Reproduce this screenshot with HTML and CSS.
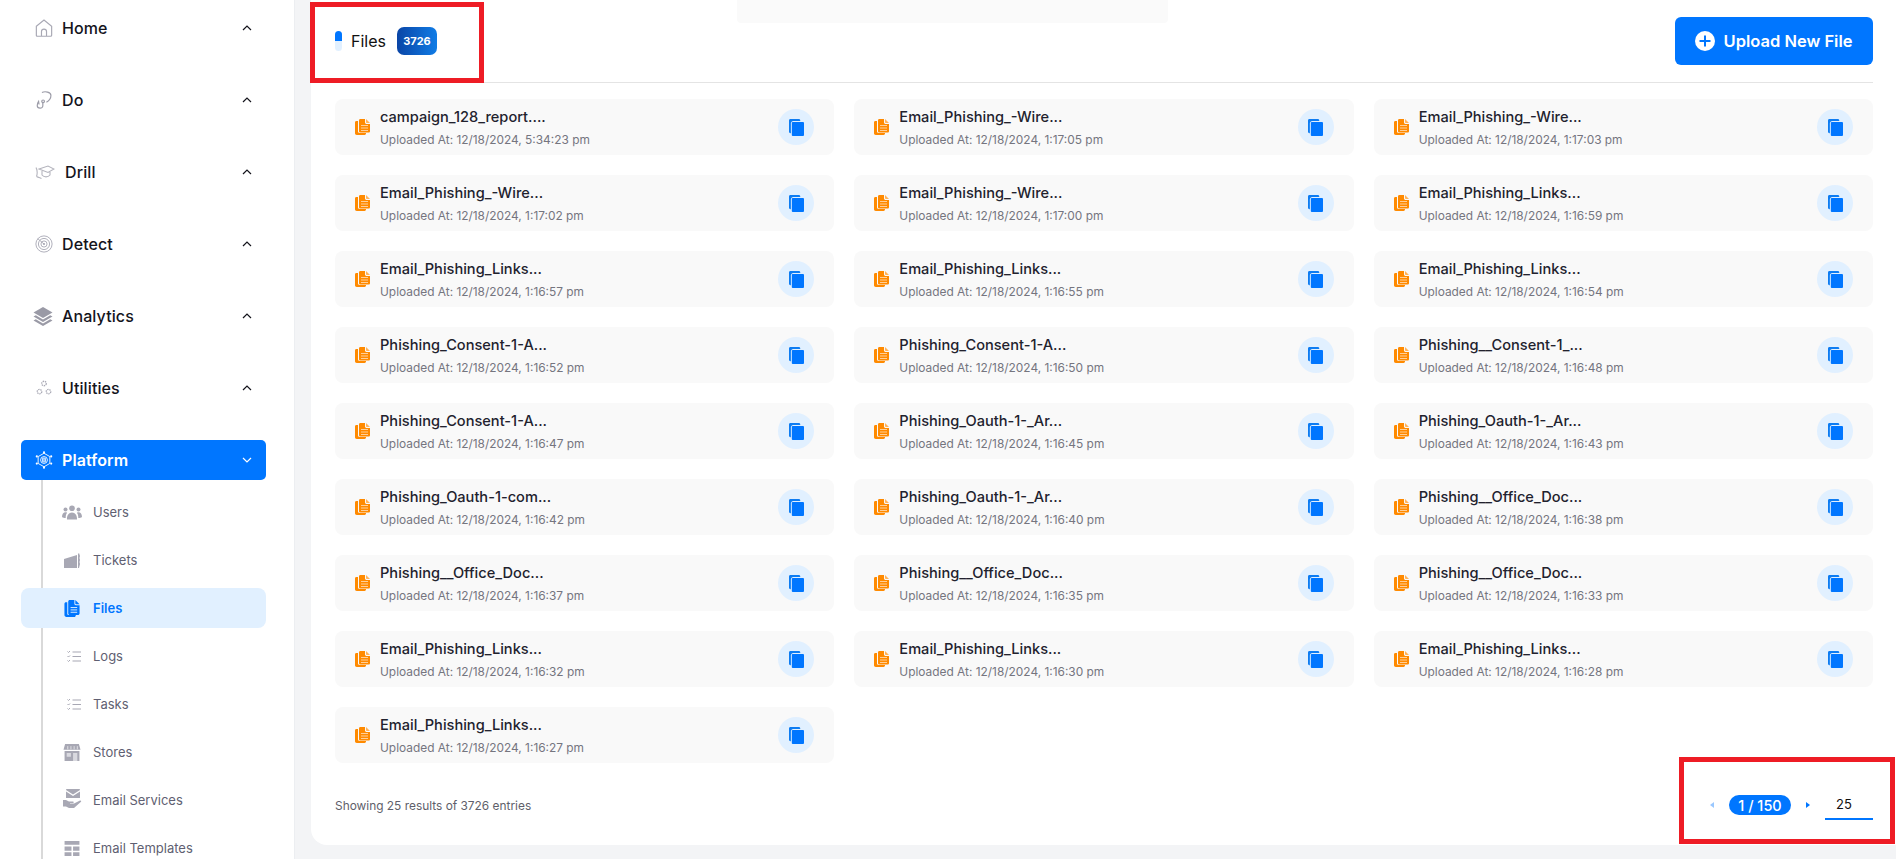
FILE: index.html
```html
<!DOCTYPE html>
<html lang="en">
<head>
  <meta charset="UTF-8">
  <meta name="viewport" content="width=device-width, initial-scale=1.0">
  <title>Files</title>
  <link rel="stylesheet" href="styles.css">
</head>
<body>
  <svg class="sprites" width="0" height="0">
    <symbol id="file-icon" viewBox="0 0 15 16">
      <path fill="#ff8a00" d="M3 2H1.4C.6 2 0 2.600 0 3.400V14.300C0 15.200.8 16 1.700 16h7.900c.8 0 1.400-.6 1.400-1.400V14H4.400C3.600 14 3 13.400 3 12.600z"/>
      <path fill="#ff8a00" d="M5.400 0C4.600 0 4 .6 4 1.400v10.800c0 .8.600 1.400 1.400 1.400h8.200c.8 0 1.400-.6 1.400-1.400V5h-3.400c-.8 0-1.600-.7-1.600-1.500V0z"/>
      <path fill="#ffb35c" d="M11 0v3.200c0 .5.400.8.800.8H15z"/>
      <path stroke="#ffcf99" stroke-width="1" d="M6 6.500h7M6 9h7M6 11.500h7"/>
    </symbol>
    <symbol id="copy-icon" viewBox="0 0 16 18">
      <path fill="#0d7cf2" d="M1.500 0h9C11.300 0 12 .7 12 1.500V2H4.500C3.100 2 2 3.100 2 4.500V15h-.5C.7 15 0 14.300 0 13.500v-12C0 .7.700 0 1.500 0z"/>
      <rect x="3" y="3" width="13" height="15" rx="1" fill="#0076ff"/>
    </symbol>
    <symbol id="check-list" viewBox="0 0 14 12">
      <path fill="none" stroke="#a8a8b4" stroke-width="1" d="M.5 1l1 1L3 .5M.5 5.500l1 1L3 5M.5 10l1 1L3 9.500"/>
      <path fill="none" stroke="#a8a8b4" stroke-width="1.200" d="M5.500 1.500H14M5.500 6H14M5.500 10.500H14"/>
    </symbol>
    <symbol id="chevron" viewBox="0 0 10 6">
      <path fill="none" stroke="currentColor" stroke-width="1.200" d="M1 5l4-4 4 4"/>
    </symbol>
  </svg>

  <div class="layout">
    <aside class="sidebar">
      <div class="nav-item">
        <svg class="nav-icon" viewBox="0 0 20 20"><path fill="none" stroke="#a8a8b4" stroke-width="1.300" d="M1.500 8L10 1.200 18.500 8v10a1.200 1.200 0 0 1-1.200 1.200H2.700A1.200 1.200 0 0 1 1.500 18zM7.200 19v-5a2.800 2.800 0 0 1 5.600 0v5"/></svg>
        <span class="nav-label">Home</span>
        <svg class="chevron"><use href="#chevron"/></svg>
      </div>
      <div class="nav-item">
        <svg class="nav-icon" viewBox="0 0 18 20"><g fill="none" stroke="#9c9ca8" stroke-width="1.300"><path d="M6.700 1.700C10 0 16.700 1 16.700 5c0 3-2.500 6-5 7.500"/><path d="M7.700 13v3.500c0 3.500-6.200 3.500-6.200-.5 0-1.500.5-3 1.500-4.500l.5 3.500"/><circle cx="8" cy="11.500" r="1.500"/></g></svg>
        <span class="nav-label">Do</span>
        <svg class="chevron"><use href="#chevron"/></svg>
      </div>
      <div class="nav-item">
        <svg class="nav-icon nav-icon-wide" viewBox="0 0 20 16"><path fill="none" stroke="#b4b4bd" stroke-width="1.100" d="M4 5l9-3 6 3-6 3.500zM7 7v4c2 2.500 6 2.500 8 0V7M1 3.500c1 2 1.500 6 .5 9M1.500 12.500c2 1 4 1.500 5 2"/></svg>
        <span class="nav-label">Drill</span>
        <svg class="chevron"><use href="#chevron"/></svg>
      </div>
      <div class="nav-item">
        <svg class="nav-icon" viewBox="0 0 20 20"><g fill="none" stroke="#a8a8b4" stroke-width="1"><circle cx="10" cy="10" r="9"/><circle cx="10" cy="10" r="6.200"/><circle cx="10" cy="10" r="3.400"/><path d="M10 10L3 4"/></g><circle cx="10" cy="10" r="1.200" fill="#a8a8b4"/></svg>
        <span class="nav-label">Detect</span>
        <svg class="chevron"><use href="#chevron"/></svg>
      </div>
      <div class="nav-item">
        <svg class="nav-icon nav-icon-layers" viewBox="0 0 20 20"><path fill="#9a9aa6" d="M10 1l9.500 5.500L10 12 .5 6.500z"/><path fill="#9a9aa6" d="M2.800 9.300L.5 10.500 10 16l9.500-5.500-2.300-1.200L10 13.500z"/><path fill="#9a9aa6" d="M2.800 13.300L.5 14.500 10 20l9.500-5.500-2.300-1.200L10 17.500z"/></svg>
        <span class="nav-label">Analytics</span>
        <svg class="chevron"><use href="#chevron"/></svg>
      </div>
      <div class="nav-item">
        <svg class="nav-icon" viewBox="0 0 20 20"><g fill="none" stroke="#a8a8b4" stroke-width="1.500" stroke-dasharray="1.500 .8"><circle cx="10" cy="5" r="2.500"/><circle cx="5" cy="14" r="2.500"/><circle cx="15" cy="14" r="2.500"/></g></svg>
        <span class="nav-label">Utilities</span>
        <svg class="chevron"><use href="#chevron"/></svg>
      </div>
      <div class="nav-item nav-item-active">
        <svg class="nav-icon" viewBox="0 0 20 20"><g fill="none" stroke="#fff" stroke-width="1"><path d="M10 2.500l6.500 3.700v7.600L10 17.500l-6.500-3.700V6.200z"/><circle cx="10" cy="10" r="3.800"/><path d="M8.500 8h3v4h-3zM8.500 10h3"/></g><g fill="#fff"><circle cx="10" cy="1.500" r="1.200"/><circle cx="10" cy="18.500" r="1.200"/><circle cx="2" cy="6" r="1.200"/><circle cx="18" cy="6" r="1.200"/><circle cx="2" cy="14" r="1.200"/><circle cx="18" cy="14" r="1.200"/></g></svg>
        <span class="nav-label">Platform</span>
        <svg class="chevron chevron-down"><use href="#chevron"/></svg>
      </div>
      <div class="sub-list">
        <div class="sub-item">
          <svg class="sub-icon" viewBox="0 0 20 14"><g fill="#a8a8b4"><circle cx="10" cy="2.800" r="2.800"/><circle cx="3.500" cy="4" r="2"/><circle cx="16.500" cy="4" r="2"/><path d="M5 14c-.3-4 1.800-7 5-7s5.300 3 5 7zM0 11.500C0 8.500 1.400 6.800 3.500 6.800c.6 0 1.100.1 1.600.4C4.200 8.300 3.700 10 3.700 12.500c-1.400 0-2.800-.4-3.700-1zM20 11.500c0-3-1.400-4.700-3.500-4.700-.6 0-1.100.1-1.600.4.900 1.100 1.400 2.800 1.400 5.300 1.400 0 2.800-.4 3.700-1z"/></g></svg>
          <span>Users</span>
        </div>
        <div class="sub-item">
          <svg class="sub-icon" viewBox="-2 0 20 15"><g fill="#a8a8b4"><path d="M0 6L13 2v13H0z"/><path d="M14 1l1-1 1 3-.5 2 .5 2-.5 2 .5 2-.5 2-.5 2h-1z"/></g></svg>
          <span>Tickets</span>
        </div>
        <div class="sub-item sub-item-active">
          <svg class="sub-icon" viewBox="0 0 16 18"><path fill="#0076ff" d="M3 2.500H1.600C.7 2.500 0 3.200 0 4.100V16c0 1.100.9 2 2 2h8.400c.9 0 1.600-.7 1.600-1.600v-.4H4.500C3.600 16 3 15.400 3 14.500z"/><path fill="#0076ff" d="M5.500 0C4.700 0 4 .7 4 1.500v12.800c0 .9.700 1.700 1.600 1.700h8.700c.9 0 1.700-.8 1.700-1.700V5.500h-4C11.200 5.500 10.500 4.800 10.500 4V0z"/><path fill="#0076ff" d="M11.500 0v3.700c0 .4.300.8.800.8H16z"/><path stroke="#e1f0ff" stroke-width="1" d="M6.500 8h7M6.500 10.500h7M6.500 13h7"/></svg>
          <span>Files</span>
        </div>
        <div class="sub-item">
          <svg class="sub-icon sub-icon-small"><use href="#check-list"/></svg>
          <span>Logs</span>
        </div>
        <div class="sub-item">
          <svg class="sub-icon sub-icon-small"><use href="#check-list"/></svg>
          <span>Tasks</span>
        </div>
        <div class="sub-item">
          <svg class="sub-icon" viewBox="0 0 16 16"><path fill="#a8a8b4" d="M1.500 0h13L16 5.500H0zM1 6.500h14V16H1z"/><path stroke="#fff" stroke-width=".6" d="M4 2v3M7 2v3M10 2v3M13 2v3"/><path fill="#d9d9df" d="M3 8.500h4V12H3zM9 8.500h4V16H9z"/></svg>
          <span>Stores</span>
        </div>
        <div class="sub-item">
          <svg class="sub-icon sub-icon-tall" viewBox="0 0 18 20"><path fill="#a8a8b4" d="M4 0h12c.6 0 1 .4 1 1l-7 4.500L3 1c0-.6.500-1 1-1zM3 2.500l7 4.500 7-4.500V9H3zM0 11h3l3 1.500h4c1 0 1 1.500 0 1.500H7v.5h4l6-3c1-.3 1.500.7 1 1.200L11 19H6l-3-1.500H0z"/></svg>
          <span>Email Services</span>
        </div>
        <div class="sub-item">
          <svg class="sub-icon" viewBox="0 0 16 16"><path fill="#a8a8b4" d="M1 1h14v3.500H1zM1 6h6.500v4H1zM9 6h6v4H9zM1 11.500h6.500V15H1zM9 11.500h6V15H9z"/></svg>
          <span>Email Templates</span>
        </div>
      </div>
    </aside>

    <main class="main">
      <section class="panel">
        <header class="panel-header">
          <div class="panel-title">
            <span class="title-mark"></span>
            <h1>Files</h1>
            <span class="count-badge">3726</span>
          </div>
          <button class="upload-btn">
            <svg class="upload-icon" viewBox="0 0 20 20"><circle cx="10" cy="10" r="10" fill="#fff"/><path stroke="#0076ff" stroke-width="2" d="M10 4.500v11M4.500 10h11"/></svg>
            Upload New File
          </button>
        </header>

        <div class="file-grid">
          <div class="file-card"><svg class="file-icon"><use href="#file-icon"/></svg><div class="file-info"><div class="file-name">campaign_128_report....</div><div class="file-date">Uploaded At: 12/18/2024, 5:34:23 pm</div></div><span class="copy-btn"><svg><use href="#copy-icon"/></svg></span></div>
          <div class="file-card"><svg class="file-icon"><use href="#file-icon"/></svg><div class="file-info"><div class="file-name">Email_Phishing_-Wire...</div><div class="file-date">Uploaded At: 12/18/2024, 1:17:05 pm</div></div><span class="copy-btn"><svg><use href="#copy-icon"/></svg></span></div>
          <div class="file-card"><svg class="file-icon"><use href="#file-icon"/></svg><div class="file-info"><div class="file-name">Email_Phishing_-Wire...</div><div class="file-date">Uploaded At: 12/18/2024, 1:17:03 pm</div></div><span class="copy-btn"><svg><use href="#copy-icon"/></svg></span></div>

          <div class="file-card"><svg class="file-icon"><use href="#file-icon"/></svg><div class="file-info"><div class="file-name">Email_Phishing_-Wire...</div><div class="file-date">Uploaded At: 12/18/2024, 1:17:02 pm</div></div><span class="copy-btn"><svg><use href="#copy-icon"/></svg></span></div>
          <div class="file-card"><svg class="file-icon"><use href="#file-icon"/></svg><div class="file-info"><div class="file-name">Email_Phishing_-Wire...</div><div class="file-date">Uploaded At: 12/18/2024, 1:17:00 pm</div></div><span class="copy-btn"><svg><use href="#copy-icon"/></svg></span></div>
          <div class="file-card"><svg class="file-icon"><use href="#file-icon"/></svg><div class="file-info"><div class="file-name">Email_Phishing_Links...</div><div class="file-date">Uploaded At: 12/18/2024, 1:16:59 pm</div></div><span class="copy-btn"><svg><use href="#copy-icon"/></svg></span></div>

          <div class="file-card"><svg class="file-icon"><use href="#file-icon"/></svg><div class="file-info"><div class="file-name">Email_Phishing_Links...</div><div class="file-date">Uploaded At: 12/18/2024, 1:16:57 pm</div></div><span class="copy-btn"><svg><use href="#copy-icon"/></svg></span></div>
          <div class="file-card"><svg class="file-icon"><use href="#file-icon"/></svg><div class="file-info"><div class="file-name">Email_Phishing_Links...</div><div class="file-date">Uploaded At: 12/18/2024, 1:16:55 pm</div></div><span class="copy-btn"><svg><use href="#copy-icon"/></svg></span></div>
          <div class="file-card"><svg class="file-icon"><use href="#file-icon"/></svg><div class="file-info"><div class="file-name">Email_Phishing_Links...</div><div class="file-date">Uploaded At: 12/18/2024, 1:16:54 pm</div></div><span class="copy-btn"><svg><use href="#copy-icon"/></svg></span></div>

          <div class="file-card"><svg class="file-icon"><use href="#file-icon"/></svg><div class="file-info"><div class="file-name">Phishing_Consent-1-A...</div><div class="file-date">Uploaded At: 12/18/2024, 1:16:52 pm</div></div><span class="copy-btn"><svg><use href="#copy-icon"/></svg></span></div>
          <div class="file-card"><svg class="file-icon"><use href="#file-icon"/></svg><div class="file-info"><div class="file-name">Phishing_Consent-1-A...</div><div class="file-date">Uploaded At: 12/18/2024, 1:16:50 pm</div></div><span class="copy-btn"><svg><use href="#copy-icon"/></svg></span></div>
          <div class="file-card"><svg class="file-icon"><use href="#file-icon"/></svg><div class="file-info"><div class="file-name">Phishing__Consent-1_...</div><div class="file-date">Uploaded At: 12/18/2024, 1:16:48 pm</div></div><span class="copy-btn"><svg><use href="#copy-icon"/></svg></span></div>

          <div class="file-card"><svg class="file-icon"><use href="#file-icon"/></svg><div class="file-info"><div class="file-name">Phishing_Consent-1-A...</div><div class="file-date">Uploaded At: 12/18/2024, 1:16:47 pm</div></div><span class="copy-btn"><svg><use href="#copy-icon"/></svg></span></div>
          <div class="file-card"><svg class="file-icon"><use href="#file-icon"/></svg><div class="file-info"><div class="file-name">Phishing_Oauth-1-_Ar...</div><div class="file-date">Uploaded At: 12/18/2024, 1:16:45 pm</div></div><span class="copy-btn"><svg><use href="#copy-icon"/></svg></span></div>
          <div class="file-card"><svg class="file-icon"><use href="#file-icon"/></svg><div class="file-info"><div class="file-name">Phishing_Oauth-1-_Ar...</div><div class="file-date">Uploaded At: 12/18/2024, 1:16:43 pm</div></div><span class="copy-btn"><svg><use href="#copy-icon"/></svg></span></div>

          <div class="file-card"><svg class="file-icon"><use href="#file-icon"/></svg><div class="file-info"><div class="file-name">Phishing_Oauth-1-com...</div><div class="file-date">Uploaded At: 12/18/2024, 1:16:42 pm</div></div><span class="copy-btn"><svg><use href="#copy-icon"/></svg></span></div>
          <div class="file-card"><svg class="file-icon"><use href="#file-icon"/></svg><div class="file-info"><div class="file-name">Phishing_Oauth-1-_Ar...</div><div class="file-date">Uploaded At: 12/18/2024, 1:16:40 pm</div></div><span class="copy-btn"><svg><use href="#copy-icon"/></svg></span></div>
          <div class="file-card"><svg class="file-icon"><use href="#file-icon"/></svg><div class="file-info"><div class="file-name">Phishing__Office_Doc...</div><div class="file-date">Uploaded At: 12/18/2024, 1:16:38 pm</div></div><span class="copy-btn"><svg><use href="#copy-icon"/></svg></span></div>

          <div class="file-card"><svg class="file-icon"><use href="#file-icon"/></svg><div class="file-info"><div class="file-name">Phishing__Office_Doc...</div><div class="file-date">Uploaded At: 12/18/2024, 1:16:37 pm</div></div><span class="copy-btn"><svg><use href="#copy-icon"/></svg></span></div>
          <div class="file-card"><svg class="file-icon"><use href="#file-icon"/></svg><div class="file-info"><div class="file-name">Phishing__Office_Doc...</div><div class="file-date">Uploaded At: 12/18/2024, 1:16:35 pm</div></div><span class="copy-btn"><svg><use href="#copy-icon"/></svg></span></div>
          <div class="file-card"><svg class="file-icon"><use href="#file-icon"/></svg><div class="file-info"><div class="file-name">Phishing__Office_Doc...</div><div class="file-date">Uploaded At: 12/18/2024, 1:16:33 pm</div></div><span class="copy-btn"><svg><use href="#copy-icon"/></svg></span></div>

          <div class="file-card"><svg class="file-icon"><use href="#file-icon"/></svg><div class="file-info"><div class="file-name">Email_Phishing_Links...</div><div class="file-date">Uploaded At: 12/18/2024, 1:16:32 pm</div></div><span class="copy-btn"><svg><use href="#copy-icon"/></svg></span></div>
          <div class="file-card"><svg class="file-icon"><use href="#file-icon"/></svg><div class="file-info"><div class="file-name">Email_Phishing_Links...</div><div class="file-date">Uploaded At: 12/18/2024, 1:16:30 pm</div></div><span class="copy-btn"><svg><use href="#copy-icon"/></svg></span></div>
          <div class="file-card"><svg class="file-icon"><use href="#file-icon"/></svg><div class="file-info"><div class="file-name">Email_Phishing_Links...</div><div class="file-date">Uploaded At: 12/18/2024, 1:16:28 pm</div></div><span class="copy-btn"><svg><use href="#copy-icon"/></svg></span></div>

          <div class="file-card"><svg class="file-icon"><use href="#file-icon"/></svg><div class="file-info"><div class="file-name">Email_Phishing_Links...</div><div class="file-date">Uploaded At: 12/18/2024, 1:16:27 pm</div></div><span class="copy-btn"><svg><use href="#copy-icon"/></svg></span></div>
        </div>

        <footer class="panel-footer">
          <span class="results">Showing 25 results of 3726 entries</span>
          <div class="pager">
            <span class="pager-arrow pager-prev"></span>
            <span class="pager-pill">1 / 150</span>
            <span class="pager-arrow pager-next"></span>
            <span class="page-size">25</span>
          </div>
        </footer>
      </section>
    </main>
  </div>

  <div class="ghost-patch"></div>
  <div class="mark-box mark-title"></div>
  <div class="mark-box mark-pager"></div>
</body>
</html>
```

FILE: styles.css
```css
* {
  box-sizing: border-box;
}
html, body {
  height: 100%;
  overflow: hidden;
}
body {
  margin: 0;
  font-family: Inter, "Noto Sans", sans-serif;
  background-color: #f3f4f6;
  color: #1f1f2b;
}
.sprites {
  position: absolute;
}
.layout {
  display: flex;
  height: 859px;
}

/* sidebar */
.sidebar {
  width: 295px;
  flex-shrink: 0;
  background: #fff;
  padding: 8px 28px 0 21px;
  overflow: hidden;
  border-right: 1px solid #eceef1;
}
.nav-item {
  display: flex;
  align-items: center;
  height: 40px;
  margin-bottom: 32px;
  padding-left: 14px;
  padding-right: 14px;
  border-radius: 5px;
  color: #14141c;
}
.nav-item-active {
  background: #0076ff;
  color: #fff;
  margin-bottom: 0;
}
.nav-icon {
  width: 18px;
  height: 18px;
  margin-right: 9px;
  flex-shrink: 0;
}
.nav-icon-wide {
  width: 20px;
  margin-right: 10px;
}
.nav-icon-layers {
  width: 20px;
  height: 20px;
  margin-left: -2px;
}
.nav-label {
  flex: 1;
  font-size: 16px;
  font-weight: 500;
  letter-spacing: .1px;
}
.nav-item-active .nav-label {
  font-weight: 600;
}
.chevron {
  width: 10px;
  height: 6px;
}
.chevron-down {
  transform: rotate(180deg);
}
.sub-list {
  margin-left: 20px;
  padding-top: 12px;
  border-left: 2px solid #d9d9d9;
  display: flex;
  flex-direction: column;
  gap: 8px;
}
.sub-item {
  display: flex;
  align-items: center;
  height: 40px;
  padding-left: 19px;
  font-size: 13px;
  color: #5f5f72;
}
.sub-item-active {
  margin-left: -22px;
  padding-left: 41px;
  background: #e1f0ff;
  border-radius: 8px;
  color: #0076ff;
  font-weight: 600;
}
.sub-icon {
  width: 20px;
  height: 17px;
  margin-right: 11px;
  flex-shrink: 0;
}
.sub-icon-small {
  width: 14px;
  height: 13px;
  margin-left: 5px;
  margin-right: 12px;
}
.sub-icon-tall {
  height: 20px;
  margin-top: -3px;
}

/* main panel */
.main {
  flex: 1;
  padding-left: 16px;
}
.panel {
  height: 845px;
  background: #fff;
  border-radius: 0 0 0 16px;
  padding: 0 23px 0 24px;
  display: flex;
  flex-direction: column;
}
.panel-header {
  display: flex;
  align-items: center;
  justify-content: space-between;
  height: 83px;
  padding-bottom: 1px;
  border-bottom: 1px solid #e4e4e4;
}
.panel-title {
  display: flex;
  align-items: center;
}
.title-mark {
  width: 7px;
  height: 20px;
  border-radius: 4px;
  background: linear-gradient(#0076ff 50%, #e1f0ff 50%);
  margin-right: 9px;
}
h1 {
  margin: 0;
  font-size: 16px;
  font-weight: 400;
  color: #111;
  padding-top: 1px;
}
.count-badge {
  margin-left: 11px;
  width: 40px;
  height: 28px;
  display: flex;
  align-items: center;
  justify-content: center;
  border-radius: 7px;
  background: linear-gradient(90deg, #0a45a6, #107ce6);
  color: #fff;
  font-size: 11px;
  font-weight: 700;
}
.upload-btn {
  display: flex;
  align-items: center;
  justify-content: center;
  gap: 8px;
  width: 198px;
  height: 48px;
  border: none;
  border-radius: 6px;
  background: #0076ff;
  color: #fff;
  font-family: inherit;
  font-size: 16.5px;
  font-weight: 600;
  cursor: pointer;
}
.upload-icon {
  width: 20px;
  height: 20px;
}

/* file cards */
.file-grid {
  display: grid;
  grid-template-columns: repeat(3, 1fr);
  gap: 20px;
  grid-auto-rows: 56px;
  margin-top: 16px;
}
.file-card {
  display: flex;
  align-items: center;
  background: #f9f9f9;
  border-radius: 8px;
  padding: 0 20px 0 20px;
}
.file-icon {
  width: 15px;
  height: 16px;
  margin-right: 10px;
  flex-shrink: 0;
}
.file-info {
  flex: 1;
}
.file-name {
  font-size: 14.6px;
  font-weight: 500;
  color: #22222e;
  line-height: 18px;
}
.file-date {
  font-size: 11.9px;
  color: #75757f;
  line-height: 15px;
  margin-top: 6px;
}
.copy-btn {
  width: 36px;
  height: 36px;
  border-radius: 50%;
  background: #e1f0ff;
  display: flex;
  align-items: center;
  justify-content: center;
}
.copy-btn svg {
  width: 15px;
  height: 17px;
}

/* footer */
.panel-footer {
  display: flex;
  align-items: center;
  justify-content: space-between;
  margin-top: 27px;
  height: 30px;
}
.results {
  font-size: 11.9px;
  color: #5f5f6b;
}
.pager {
  display: flex;
  align-items: center;
}
.pager-arrow {
  width: 0;
  height: 0;
  border-top: 3.5px solid transparent;
  border-bottom: 3.5px solid transparent;
}
.pager-prev {
  border-right: 4px solid #9ac8ff;
}
.pager-next {
  border-left: 4px solid #0076ff;
}
.pager-pill {
  margin: 0 15px;
  width: 62px;
  height: 20px;
  border-radius: 10px;
  background: #0076ff;
  color: #fff;
  font-size: 14.5px;
  font-weight: 500;
  display: flex;
  align-items: center;
  justify-content: center;
}
.page-size {
  margin-left: 15px;
  width: 48px;
  height: 30px;
  padding: 6px 0 0 11px;
  border-bottom: 2px solid #0076ff;
  font-size: 13px;
  color: #111;
}

/* things lying over the page */
.ghost-patch {
  position: absolute;
  top: 0;
  left: 737px;
  width: 431px;
  height: 23px;
  background: #fafafa;
  border-radius: 0 0 4px 4px;
}
.mark-box {
  position: absolute;
  border: 5px solid #ee1c25;
}
.mark-title {
  left: 310px;
  top: 2px;
  width: 174px;
  height: 81px;
}
.mark-pager {
  left: 1679px;
  top: 757px;
  width: 216px;
  height: 87px;
}
```
